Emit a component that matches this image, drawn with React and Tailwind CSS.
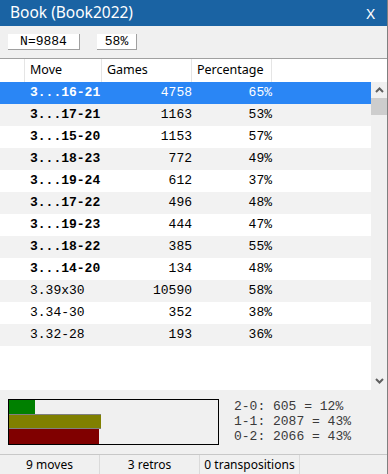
import React from 'react'

const rows = [
  { move: '3...16-21', games: 4758, pct: '65%', bold: true },
  { move: '3...17-21', games: 1163, pct: '53%', bold: true },
  { move: '3...15-20', games: 1153, pct: '57%', bold: true },
  { move: '3...18-23', games: 772, pct: '49%', bold: true },
  { move: '3...19-24', games: 612, pct: '37%', bold: true },
  { move: '3...17-22', games: 496, pct: '48%', bold: true },
  { move: '3...19-23', games: 444, pct: '47%', bold: true },
  { move: '3...18-22', games: 385, pct: '55%', bold: true },
  { move: '3...14-20', games: 134, pct: '48%', bold: true },
  { move: '3.39x30', games: 10590, pct: '58%', bold: false },
  { move: '3.34-30', games: 352, pct: '38%', bold: false },
  { move: '3.32-28', games: 193, pct: '36%', bold: false },
]

const mono = { fontFamily: '"Liberation Mono", "Courier New", monospace' }
const ui = { fontFamily: '"Noto Sans", "Open Sans", sans-serif' }

const Chevron = ({ down }) => (
  <svg width="9" height="6" viewBox="0 0 9 6">
    <polyline
      points={down ? '1,1 4.5,4.5 8,1' : '1,5 4.5,1.5 8,5'}
      fill="none"
      stroke="#606060"
      strokeWidth="2"
    />
  </svg>
)

const App = () => {
  return (
    <div className="w-[388px] h-[474px] bg-[#f0f0f0] border-r border-[#7f7f7f] flex flex-col overflow-hidden" style={ui}>
      {/* title */}
      <div className="h-[26px] bg-[#1a63a3] text-white flex items-center justify-between pl-[10px] pr-[12px] shrink-0">
        <span className="text-[15.5px] leading-none">Book (Book2022)</span>
        <span className="text-[15px] leading-none">X</span>
      </div>

      {/* toolbar */}
      <div className="h-[32px] flex items-center pl-[8px] gap-[17px] shrink-0 text-[13px] text-black" style={mono}>
        <div className="w-[72px] h-[16px] bg-white border-r border-b border-[#a0a0a0] flex items-center justify-center leading-none">N=9884</div>
        <div className="w-[40px] h-[16px] bg-white border-r border-b border-[#a0a0a0] flex items-center justify-center leading-none">58%</div>
      </div>

      {/* list */}
      <div className="h-[332px] border-t border-[#a0a0a0] flex flex-col shrink-0">
        <div className="h-[23px] bg-white flex text-[12.5px] text-black shrink-0">
          <div className="w-[25px] border-r border-[#e5e5e5]" />
          <div className="w-[77px] border-r border-[#e5e5e5] pl-[5px] flex items-center">Move</div>
          <div className="w-[90px] border-r border-[#e5e5e5] pl-[5px] flex items-center">Games</div>
          <div className="w-[80px] border-r border-[#e5e5e5] pl-[5px] flex items-center">Percentage</div>
        </div>
        <div className="flex flex-1">
          <div className="w-[371px] bg-white">
            {rows.map((r, i) => {
              const sel = i === 0
              const bg = sel ? 'bg-[#2a86f5] text-white' : i % 2 === 1 ? 'bg-[#f2f2f2] text-black' : 'bg-white text-black'
              return (
                <div key={r.move} className={`h-[22px] flex items-center text-[13px] ${bg}`} style={mono}>
                  <div className="w-[25px]" />
                  <div className={`w-[77px] pl-[5px] ${r.bold ? 'font-bold' : ''}`}>{r.move}</div>
                  <div className="w-[90px] text-right">{r.games}</div>
                  <div className="w-[80px] text-right">{r.pct}</div>
                </div>
              )
            })}
          </div>
          <div className="w-[16px] flex flex-col items-center">
            <div className="h-[16px] flex items-center justify-center">
              <Chevron />
            </div>
            <div className="w-full h-[17px] bg-[#cdcdcd]" />
            <div className="flex-1" />
            <div className="h-[18px] flex items-center justify-center">
              <Chevron down />
            </div>
          </div>
        </div>
      </div>

      {/* stats */}
      <div className="h-[64px] flex items-start pt-[9px] pl-[8px] shrink-0">
        <div className="w-[211px] h-[46px] border border-black bg-[#f0f0f0] flex flex-col">
          <div className="w-[26px] h-[14px] bg-[#008000]" />
          <div className="w-[92px] h-[15px] bg-[#808000] border-t border-b border-[#808080]" />
          <div className="w-[90px] h-[15px] bg-[#800000]" />
        </div>
        <div className="ml-[15px] text-[13px] leading-[15px] text-[#3a3a3a] whitespace-pre" style={mono}>
          <div>2-0: 605 = 12%</div>
          <div>1-1: 2087 = 43%</div>
          <div>0-2: 2066 = 43%</div>
        </div>
      </div>

      {/* status */}
      <div className="h-[20px] border-t border-[#c8c8c8] flex text-[12px] text-black shrink-0">
        <div className="w-[100px] border-r border-[#dadada] flex items-center justify-center">9 moves</div>
        <div className="w-[100px] border-r border-[#dadada] flex items-center justify-center">3 retros</div>
        <div className="w-[100px] border-r border-[#dadada] flex items-center justify-center">0 transpositions</div>
      </div>
    </div>
  )
}

export default App
